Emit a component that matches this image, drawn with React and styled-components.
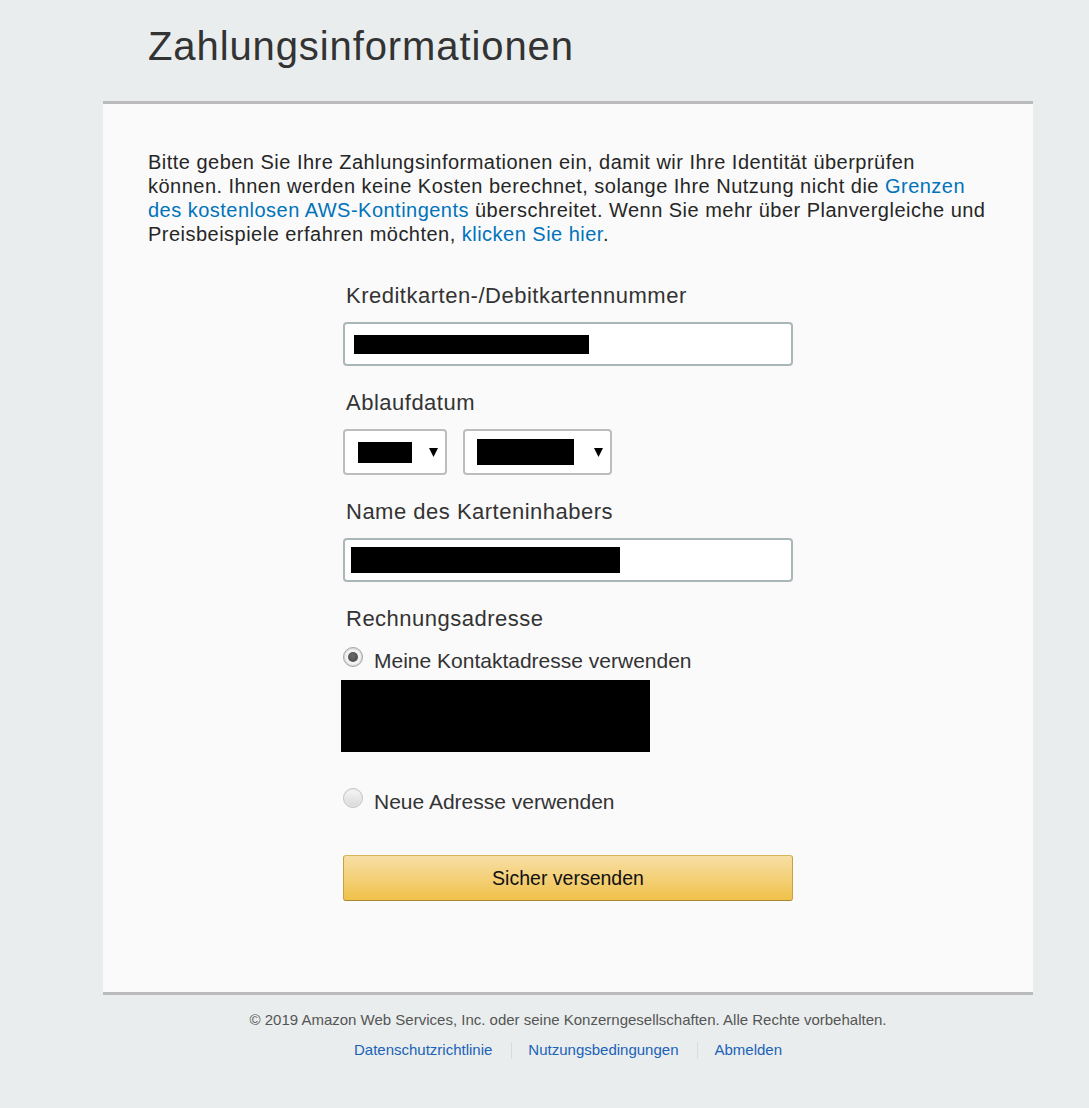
import React from "react";
import styled, { createGlobalStyle } from "styled-components";

const GlobalStyle = createGlobalStyle`
  html, body {
    margin: 0;
    padding: 0;
    background: #e9eded;
  }
  body {
    font-family: "Liberation Sans", Arial, sans-serif;
    color: #333;
    min-height: 100vh;
  }
  * { box-sizing: border-box; }
`;

const Page = styled.div`
  width: 930px;
  margin-left: 103px;
`;

const Title = styled.h1`
  margin: 0;
  padding: 22px 45px 31px;
  font-size: 40px;
  line-height: 48px;
  font-weight: 400;
  letter-spacing: 0.9px;
  color: #333;
`;

const Panel = styled.section`
  background: #fafafa;
  border-top: 3px solid #bbbbbb;
  border-bottom: 3px solid #bbbbbb;
  padding: 46px 45px 91px;
`;

const Intro = styled.p`
  margin: 0 0 37px;
  font-size: 20px;
  line-height: 24px;
  letter-spacing: 0.48px;
  color: #262626;
`;

const TextLink = styled.a`
  color: #0073bb;
  text-decoration: none;
`;

const Form = styled.form`
  width: 450px;
  margin: 0 auto;
  display: flex;
  flex-direction: column;
`;

const Field = styled.div`
  display: flex;
  flex-direction: column;
  & + & {
    margin-top: 24px;
  }
`;

const Label = styled.label`
  display: block;
  padding-left: 3px;
  margin-bottom: 13px;
  font-size: 22px;
  line-height: 26px;
  letter-spacing: 0.5px;
  color: #333;
`;

const TextBox = styled.div`
  height: 44px;
  border: 2px solid #aab7b8;
  border-radius: 4px;
  background: #fff;
  display: flex;
  align-items: center;
  padding-left: ${(p) => p.$pad}px;
`;

const Redacted = styled.span`
  display: block;
  flex: none;
  background: #000;
  width: ${(p) => p.$w}px;
  height: ${(p) => p.$h}px;
`;

const SelectRow = styled.div`
  display: flex;
  gap: 16px;
`;

const SelectBox = styled.div`
  width: ${(p) => p.$w}px;
  height: 46px;
  border: 2px solid #bdbdbd;
  border-radius: 4px;
  background: #fff;
  display: flex;
  align-items: center;
  justify-content: space-between;
  padding: 0 7px 0 ${(p) => p.$pad}px;
`;

const Caret = styled.svg`
  width: 9px;
  height: 9px;
  flex: none;
`;

const RadioRow = styled.label`
  display: flex;
  align-items: flex-start;
  gap: 11px;
  margin-top: ${(p) => p.$space || 0}px;
  font-size: 21px;
  line-height: 27px;
  color: #333;
`;

const RadioDot = styled.span`
  position: relative;
  flex: none;
  width: 20px;
  height: 20px;
  border-radius: 50%;
  border: 1px solid ${(p) => (p.$checked ? "#a4a4a4" : "#c4c4c4")};
  background: ${(p) =>
    p.$checked
      ? "radial-gradient(circle, #f2f2f2 55%, #dedede 100%)"
      : "linear-gradient(#f6f6f6, #d9d9d9)"};
  box-shadow: inset 0 0 0 1px ${(p) => (p.$checked ? "#d6d6d6" : "#e8e8e8")};
  &::after {
    content: "";
    display: ${(p) => (p.$checked ? "block" : "none")};
    position: absolute;
    left: 50%;
    top: 50%;
    width: 10px;
    height: 10px;
    margin: -5px 0 0 -5px;
    border-radius: 50%;
    background: radial-gradient(circle at 45% 40%, #6a6a6a, #444);
  }
`;

const AddressBlock = styled(Redacted)`
  margin: 6px 0 0 -2px;
`;

const SubmitButton = styled.button`
  width: 100%;
  height: 46px;
  margin-top: 40px;
  border: 1px solid;
  border-color: #d8b457 #c9a23f #a88734;
  border-radius: 3px;
  background: linear-gradient(#f7dfa5, #f0c14b);
  font-family: "Liberation Sans", Arial, sans-serif;
  font-size: 19.5px;
  color: #111;
  cursor: pointer;
`;

const Footer = styled.footer`
  padding-top: 15px;
  text-align: center;
`;

const Copyright = styled.p`
  margin: 0;
  font-size: 15px;
  line-height: 20px;
  color: #555;
`;

const FooterLinks = styled.nav`
  margin-top: 10px;
  display: flex;
  justify-content: center;
  align-items: center;
`;

const FooterLink = styled.a`
  font-size: 15px;
  line-height: 20px;
  color: #1a62b8;
  text-decoration: none;
`;

const Divider = styled.span`
  width: 1px;
  height: 17px;
  background: #d9dcdc;
  margin: 0 16px 0 19px;
`;

const CaretIcon = () => (
  <Caret viewBox="0 0 9 9">
    <polygon points="0,0 9,0 4.5,9" fill="#000" />
  </Caret>
);

export default function App() {
  return (
    <>
      <GlobalStyle />
      <Page>
        <Title>Zahlungsinformationen</Title>
        <Panel>
          <Intro>
            Bitte geben Sie Ihre Zahlungsinformationen ein, damit wir Ihre Identität überprüfen
            <br />
            können. Ihnen werden keine Kosten berechnet, solange Ihre Nutzung nicht die{" "}
            <TextLink href="#">Grenzen</TextLink>
            <br />
            <TextLink href="#">des kostenlosen AWS-Kontingents</TextLink> überschreitet. Wenn Sie
            mehr über Planvergleiche und
            <br />
            Preisbeispiele erfahren möchten, <TextLink href="#">klicken Sie hier</TextLink>.
          </Intro>
          <Form onSubmit={(e) => e.preventDefault()}>
            <Field>
              <Label>Kreditkarten-/Debitkartennummer</Label>
              <TextBox $pad={9}>
                <Redacted $w={235} $h={19} />
              </TextBox>
            </Field>
            <Field>
              <Label>Ablaufdatum</Label>
              <SelectRow>
                <SelectBox $w={104} $pad={13}>
                  <Redacted $w={54} $h={21} />
                  <CaretIcon />
                </SelectBox>
                <SelectBox $w={149} $pad={12}>
                  <Redacted $w={97} $h={26} />
                  <CaretIcon />
                </SelectBox>
              </SelectRow>
            </Field>
            <Field>
              <Label>Name des Karteninhabers</Label>
              <TextBox $pad={6}>
                <Redacted $w={269} $h={26} />
              </TextBox>
            </Field>
            <Field>
              <Label>Rechnungsadresse</Label>
              <RadioRow $space={2}>
                <RadioDot $checked />
                Meine Kontaktadresse verwenden
              </RadioRow>
              <AddressBlock $w={309} $h={72} />
              <RadioRow $space={36}>
                <RadioDot />
                Neue Adresse verwenden
              </RadioRow>
            </Field>
            <SubmitButton type="submit">Sicher versenden</SubmitButton>
          </Form>
        </Panel>
        <Footer>
          <Copyright>
            © 2019 Amazon Web Services, Inc. oder seine Konzerngesellschaften. Alle Rechte
            vorbehalten.
          </Copyright>
          <FooterLinks>
            <FooterLink href="#">Datenschutzrichtlinie</FooterLink>
            <Divider />
            <FooterLink href="#">Nutzungsbedingungen</FooterLink>
            <Divider />
            <FooterLink href="#">Abmelden</FooterLink>
          </FooterLinks>
        </Footer>
      </Page>
    </>
  );
}
